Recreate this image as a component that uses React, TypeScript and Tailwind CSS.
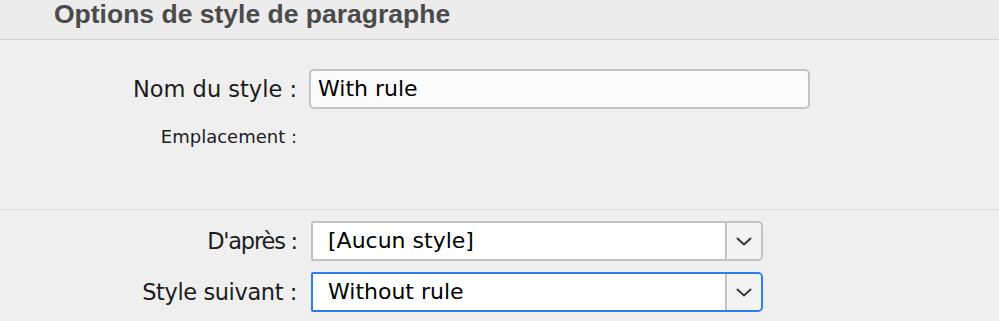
import { ReactNode } from "react";

const FONT = { fontFamily: '"DejaVu Sans", "Liberation Sans", sans-serif' };

function Chevron() {
  return (
    <svg width="16" height="9" viewBox="0 0 16 9" fill="none">
      <path d="M1.5 1.5 L8 7.5 L14.5 1.5" stroke="#3a3a3a" strokeWidth="2" strokeLinecap="round" strokeLinejoin="round" />
    </svg>
  );
}

function Row({
  label,
  children,
  gap = "ml-[9px]",
  tracking = "",
}: {
  label: string;
  children: ReactNode;
  gap?: string;
  tracking?: string;
}) {
  return (
    <div className="flex items-center">
      <div className={`w-[297px] text-right text-[22.5px] leading-none text-[#1c1c1c] ${tracking}`}>{label}</div>
      <div className={gap}>{children}</div>
    </div>
  );
}

function Select({ value, focused }: { value: string; focused?: boolean }) {
  return (
    <div
      className={`flex h-[40px] w-[452px] rounded-l-[2px] rounded-r-[5px] border-2 bg-white ${
        focused ? "border-[#2e7cf0]" : "border-[#c2c2c2]"
      }`}
    >
      <div className="flex flex-1 items-center pl-[15px] text-[22px] leading-none text-black">{value}</div>
      <div className="flex w-[36px] items-center justify-center rounded-r-[4px] border-l-2 border-[#c2c2c2] bg-[#f4f4f4]">
        <Chevron />
      </div>
    </div>
  );
}

export default function App() {
  return (
    <div className="h-[321px] w-[999px] overflow-hidden bg-[#efefef]" style={FONT}>
      <header className="h-[40px] border-b border-[#d3d3d3] bg-[#ececec] pl-[54px]">
        <h1
          className="text-[26.5px] font-bold leading-[29px] text-[#4b4b4b]"
          style={{ fontFamily: '"Liberation Sans", Arial, sans-serif' }}
        >
          Options de style de paragraphe
        </h1>
      </header>

      <section className="h-[170px] border-b border-[#d8d8d8] pt-[29px]">
        <Row label="Nom du style :" gap="ml-[12px]">
          <div className="flex h-[40px] w-[501px] items-center rounded-[5px] border-2 border-[#c2c2c2] bg-[#fbfbfb] pl-[7px] text-[22px] leading-none text-black">
            With rule
          </div>
        </Row>
        <div className="mt-[19px] flex">
          <div className="w-[297px] text-right text-[18px] leading-none text-[#1c1c1c]">Emplacement :</div>
        </div>
      </section>

      <section className="flex flex-col gap-[11px] pt-[11px]">
        <Row label="D'après :" gap="ml-[14px]" tracking="tracking-[-1.2px]">
          <Select value="[Aucun style]" />
        </Row>
        <Row label="Style suivant :" gap="ml-[14px]" tracking="tracking-[-0.4px]">
          <Select value="Without rule" focused />
        </Row>
      </section>
    </div>
  );
}
